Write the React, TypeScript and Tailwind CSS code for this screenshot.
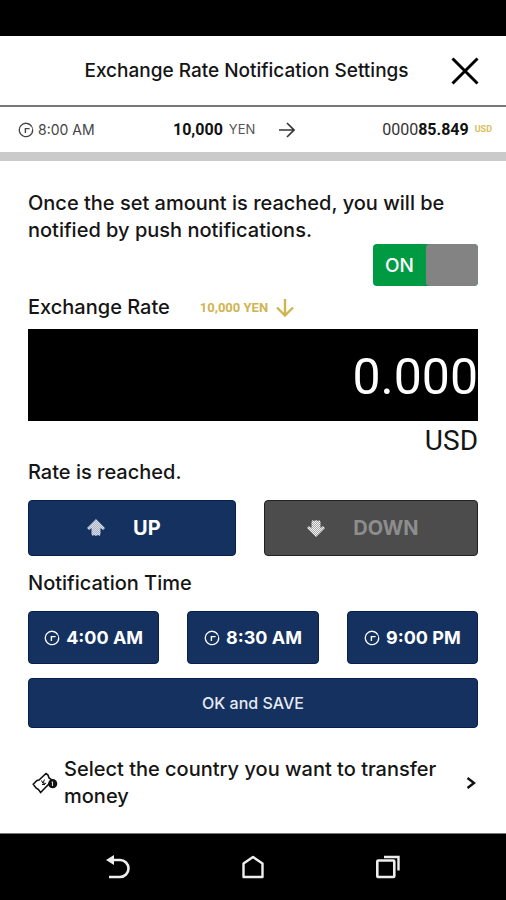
import { useState } from "react";

const numeric = "font-['Roboto',sans-serif]";

function ClockIcon({ className }: { className: string }) {
  return (
    <svg className={className} viewBox="0 0 16 16" fill="none" stroke="currentColor" aria-hidden="true">
      <path d="M13.8 4.6A6.7 6.7 0 1 0 14.7 8" strokeWidth="1.3" />
      <path d="M14 5A6.7 6.7 0 0 1 14.7 8" strokeWidth="1" />
      <path d="M11.6 6.6H7.4V11" strokeWidth="1.4" />
    </svg>
  );
}

function BlockArrow({ down = false }: { down?: boolean }) {
  return (
    <svg className={down ? "h-[18px] w-[18px] rotate-180" : "h-[18px] w-[18px]"} viewBox="0 0 18 18" aria-hidden="true">
      <defs>
        <pattern id={down ? "dots-down" : "dots-up"} width="2" height="2" patternUnits="userSpaceOnUse">
          <rect width="2" height="2" fill={down ? "#a8a8a8" : "#a9b4c6"} />
          <rect width="1" height="1" fill={down ? "#f0f0f0" : "#d5dbe5"} />
          <rect x="1" y="1" width="1" height="1" fill={down ? "#f0f0f0" : "#d5dbe5"} />
        </pattern>
      </defs>
      <path
        d="M9 0L18 9L16 11L13.5 9V15L12.5 17L11 16L9 17L7 16L5.5 17L4.5 15V9L2 11L0 9Z"
        fill={down ? "url(#dots-down)" : "url(#dots-up)"}
      />
    </svg>
  );
}

function TicketIcon() {
  return (
    <svg className="h-[22px] w-[26px] shrink-0" viewBox="0 0 26 22" fill="none" stroke="#111" aria-hidden="true">
      <path d="M1.2 12.2L5 8.4L7 8L14 1.5L16 3L17 6L20.5 8.4L12 17L8.6 20.6L6.5 17.5L4 16Z" strokeWidth="1.6" />
      <path d="M9.5 8.5L11 11.5M12.5 7.5L11 11L14 11.5M10 12.5H13" strokeWidth="1" />
      <circle cx="20.7" cy="11.7" r="4.6" fill="#111" stroke="none" />
      <path d="M20.5 9.5V14M19.6 10.2H20.5" stroke="#ddd" strokeWidth="1.1" />
    </svg>
  );
}

const times = ["4:00 AM", "8:30 AM", "9:00 PM"];

export default function App() {
  const [on, setOn] = useState(true);
  const [rate, setRate] = useState("0.000");

  return (
    <div className="flex min-h-screen flex-col bg-white font-['Inter','Noto_Sans',sans-serif] text-[20px] leading-[27px] text-[#151515]">
      <div className="h-9 bg-black" />
      <header className="flex h-[71px] items-center border-b-2 border-[#777] pr-[27px] pl-[42px]">
        <h1 className="flex-1 text-center text-[19px] font-medium">Exchange Rate Notification Settings</h1>
        <button type="button" aria-label="Close" className="text-black">
          <svg className="h-7 w-7" viewBox="0 0 28 28" stroke="currentColor" strokeWidth="3" aria-hidden="true">
            <path d="M1.5 1.5L26.5 26.5M26.5 1.5L1.5 26.5" />
          </svg>
        </button>
      </header>

      <div className="flex h-[54px] items-center border-b-[9px] border-[#cacaca] pr-[14px] pl-[18px]">
        <div className="flex w-[155px] items-center gap-1 text-[14px] text-[#444]">
          <ClockIcon className="h-4 w-4" />
          8:00 AM
        </div>
        <div className="flex flex-1 items-center">
          <span className={`${numeric} text-[16px] font-bold text-[#111]`}>10,000</span>
          <span className="ml-[6px] text-[13px] text-[#555]">YEN</span>
          <svg className="ml-6 h-4 w-4" viewBox="0 0 16 16" fill="none" stroke="#333" strokeWidth="1.6" aria-hidden="true">
            <path d="M0 8H15M8 1L15 8L8 15" />
          </svg>
        </div>
        <div className={`${numeric} flex items-center gap-[6px] text-[16px] text-[#333]`}>
          <span>
            0000<b className="text-[#111]">85.849</b>
          </span>
          <span className="text-[9px] font-bold text-[#d6c05e]">USD</span>
        </div>
      </div>

      <main className="flex flex-1 flex-col px-7 pt-[29px]">
        <p className="font-medium">Once the set amount is reached, you will be notified by push notifications.</p>

        <label className="flex h-[42px] w-[105px] cursor-pointer self-end overflow-hidden rounded bg-[#009a43] text-white">
          <input
            type="checkbox"
            role="switch"
            aria-label="Push notifications"
            className="sr-only"
            checked={on}
            onChange={(e) => setOn(e.target.checked)}
          />
          <span className="flex flex-1 items-center justify-center text-[19px] font-medium">{on ? "ON" : "OFF"}</span>
          <span className="w-[52px] rounded bg-[#838383]" />
        </label>

        <div className="mt-2 flex items-center">
          <label htmlFor="rate" className="font-medium">Exchange Rate</label>
          <span className={`${numeric} ml-[30px] text-[13px] font-bold text-[#d0b452]`}>10,000 YEN</span>
          <svg className="ml-2 h-[18px] w-[18px]" viewBox="0 0 18 18" fill="none" stroke="#d0b452" strokeWidth="2.4" aria-hidden="true">
            <path d="M9 0V16.5M1 8.5L9 16.5L17 8.5" />
          </svg>
        </div>

        <input
          id="rate"
          inputMode="decimal"
          value={rate}
          onChange={(e) => setRate(e.target.value)}
          className="mt-2 h-[92px] w-full bg-black pt-1 text-right font-['Roboto',sans-serif] text-[50px] text-white"
        />
        <div className="mt-1 text-right font-['Roboto',sans-serif] text-[28px] leading-8">USD</div>

        <p className="mt-[2px] font-medium">Rate is reached.</p>
        <div className="mt-[14px] flex gap-7">
          <button type="button" className="flex h-14 flex-[207] items-center justify-center gap-7 rounded border border-[#08204b] bg-[#14315f] pr-4 text-[20px] font-bold text-white">
            <BlockArrow />
            UP
          </button>
          <button type="button" className="flex h-14 flex-[214] items-center justify-center gap-7 rounded border border-[#222] bg-[#4c4c4c] pr-4 text-[20px] font-bold text-[#8d8d8d]">
            <BlockArrow down />
            DOWN
          </button>
        </div>

        <h2 className="mt-[14px] font-medium">Notification Time</h2>
        <div className="mt-[14px] grid grid-cols-3 gap-7">
          {times.map((time) => (
            <button key={time} type="button" className="flex h-[53px] items-center justify-center gap-[6px] rounded border border-[#08204b] bg-[#14315f] text-[18px] font-bold whitespace-nowrap text-white">
              <ClockIcon className="h-4 w-4" />
              {time}
            </button>
          ))}
        </div>
        <button type="button" className="mt-[14px] h-[50px] rounded border border-[#08204b] bg-[#14315f] text-[16px] font-medium text-[#e6eaf0]">
          OK and SAVE
        </button>

        <a href="#country" className="mt-7 flex items-center gap-[6px] pl-1 font-medium">
          <TicketIcon />
          <span className="flex-1 pr-[14px]">Select the country you want to transfer money</span>
          <svg className="mr-[2px] h-3 w-[10px]" viewBox="0 0 10 12" fill="none" stroke="#111" strokeWidth="2.4" aria-hidden="true">
            <path d="M1.5 1L8 6L1.5 11" />
          </svg>
        </a>
      </main>

      <nav className="flex h-[67px] items-center justify-center gap-[111px] border-t border-[#777] bg-black text-[#eee]">
        <button type="button" aria-label="Back">
          <svg className="h-6 w-6" viewBox="0 0 24 24" fill="none" stroke="currentColor" strokeWidth="2.6" aria-hidden="true">
            <path d="M5 5H14A8.5 8.5 0 0 1 14 22H3" />
            <path d="M0 5L8 0V10Z" fill="currentColor" stroke="none" />
          </svg>
        </button>
        <button type="button" aria-label="Home">
          <svg className="h-6 w-6" viewBox="0 0 24 24" fill="none" stroke="currentColor" strokeWidth="2.4" strokeLinejoin="round" aria-hidden="true">
            <path d="M2.5 8.5L12 2L21.5 8.5V22H2.5Z" />
          </svg>
        </button>
        <button type="button" aria-label="Recent apps">
          <svg className="h-6 w-6" viewBox="0 0 24 24" fill="none" stroke="currentColor" aria-hidden="true">
            <rect x="1.3" y="5.5" width="17" height="16.5" rx="1" strokeWidth="2.6" />
            <path d="M8 2H22.5V15.5" strokeWidth="2.4" />
          </svg>
        </button>
      </nav>
    </div>
  );
}
